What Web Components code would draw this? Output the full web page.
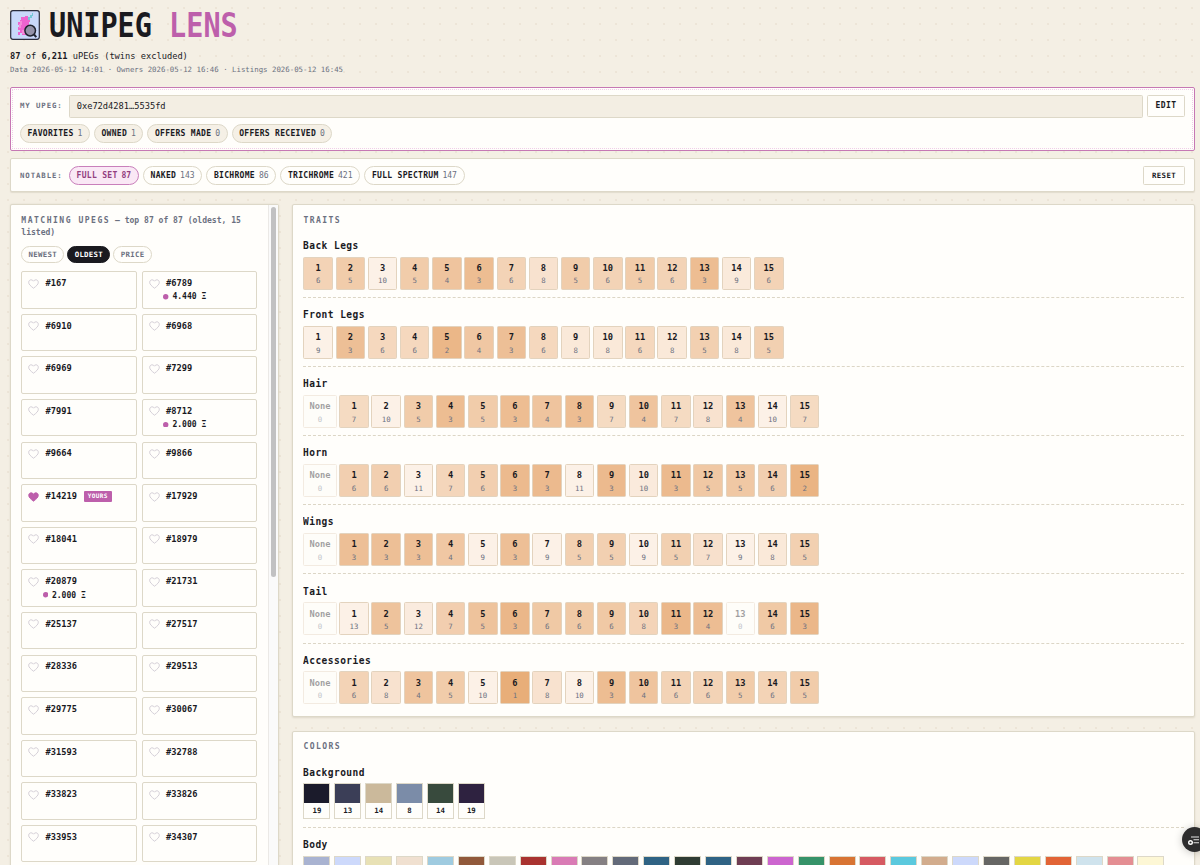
<!DOCTYPE html>
<html lang="en">
<head>
<meta charset="utf-8">
<title>Unipeg Lens</title>
<style>
    html, body {
        margin: 0;
        height: 865px;
        overflow: hidden;
    }
    body {
        --ink: #1a1a1f;
        --muted: #6b7080;
        --line: #ddd8c8;
        --paper: #fffefb;
        --cream: #f5f0e6;
        --pink: #bd5fab;
        background-color: #f4efe4;
        background-image: radial-gradient(circle, #ece4d7 0.7px, transparent 1.1px);
        background-size: 16px 16px;
        color: var(--ink);
        font-family: "DejaVu Sans Mono", "Liberation Mono", monospace;
        font-size: 8.7px;
    }
</style>
</head>
<body>
<lens-app></lens-app>
<script>
class LensHeader extends HTMLElement {

    constructor() {
        super();
        this.shadow = this.attachShadow({mode: 'open'});
        this.render();
    }

    render() {
        this.shadow.innerHTML =
        `
        <style>
            :host{
                display: block;
                height: 77.3px;
                white-space: nowrap;
            }
            .brand{
                display: flex;
                align-items: center;
                gap: 9px;
                height: 30px;
            }
            svg{
                display: block;
                flex: none;
            }
            h1{
                margin: 0;
                font-size: 34px;
                line-height: 30px;
                letter-spacing: 0;
                transform: scaleX(.838);
                transform-origin: 0 50%;
            }
            h1 span{
                color: var(--pink);
            }
            .count{
                margin-top: 10px;
                line-height: 12px;
            }
            .dates{
                margin-top: 3px;
                font-size: 7.38px;
                line-height: 10px;
                color: var(--muted);
            }
        </style>
        <div class="brand">
            <svg width="30" height="30" viewBox="0 0 30 30">
                <rect x=".7" y=".7" width="28.6" height="28.6" rx="2.2" fill="#c9d8fa" stroke="#2b2c3c" stroke-width="1.2"/>
                <path d="M12 7h3v-1h3v3h2v3h-1v3h1v3h-3v7h-5v-2h-2v2H8v-3h2v-2H8v-3h1v-2H8v-3h2v-2h1v-3h1z" fill="#ee63cf"/>
                <path d="M10 11h2v4h-1v3h-2v-4h1zM12 20h3v4h-3z" fill="#f58bd9"/>
                <path d="M18 7h2V5h2V3h1v3h-1v2h-2v2h-2z" fill="#76c9d6"/>
                <circle cx="20.2" cy="20.6" r="5.3" fill="#9492a8" stroke="#20232f" stroke-width="1.5"/>
                <path d="M24 24.5l2.3 2.6" stroke="#20232f" stroke-width="2"/>
            </svg>
            <h1>UNIPEG <span>LENS</span></h1>
        </div>
        <div class="count"><b>87</b> of <b>6,211</b> uPEGs (twins excluded)</div>
        <div class="dates">Data 2026-05-12 14:01 · Owners 2026-05-12 16:46 · Listings 2026-05-12 16:45</div>
        `;
    }
}

customElements.define('lens-header', LensHeader);

class LensChip extends HTMLElement {

    constructor() {
        super();
        this.shadow = this.attachShadow({mode: 'open'});
    }

    connectedCallback() {
        this.render();
    }

    render() {
        const count = this.getAttribute('count');
        this.shadow.innerHTML =
        `
        <style>
            :host{
                display: flex;
                align-items: center;
                gap: 3.9px;
                box-sizing: border-box;
                height: 19px;
                padding: 0 6.5px;
                border: 1px solid var(--line);
                border-radius: 10px;
                background: var(--paper);
                font-size: 8.05px;
                font-weight: bold;
                letter-spacing: .28px;
                white-space: nowrap;
            }
            .count{
                color: var(--muted);
                font-weight: normal;
                letter-spacing: 0;
            }
            :host([tinted]){
                background: var(--cream);
            }
            :host([active]){
                background: #fae8f5;
                border-color: #c97fbb;
                color: #93407f;
            }
            :host([active]) .count{
                color: #93407f;
                font-weight: bold;
            }
            :host([small]){
                height: 17px;
                padding: 0 6.3px;
                font-size: 7.38px;
                letter-spacing: .3px;
                color: var(--muted);
            }
            :host([small][active]){
                background: var(--ink);
                border-color: var(--ink);
                color: #fff;
            }
        </style>
        <span><slot></slot></span>${count === null ? '' : `<span class="count">${count}</span>`}
        `;
    }
}

customElements.define('lens-chip', LensChip);

class LensButton extends HTMLElement {

    constructor() {
        super();
        this.shadow = this.attachShadow({mode: 'open'});
        this.shadow.innerHTML =
        `
        <style>
            :host{
                display: flex;
                align-items: center;
                justify-content: center;
                box-sizing: border-box;
                border: 1px solid var(--line);
                border-radius: 1.5px;
                background: var(--paper);
                font-weight: bold;
            }
        </style>
        <slot></slot>
        `;
    }
}

customElements.define('lens-button', LensButton);

class LensWallet extends HTMLElement {

    constructor() {
        super();
        this.shadow = this.attachShadow({mode: 'open'});
        this.render();
    }

    render() {
        this.shadow.innerHTML =
        `
        <style>
            :host{
                display: block;
                box-sizing: border-box;
                height: 63.5px;
                padding: 6.5px 9px 0 9px;
                border: 1px solid #c678b4;
                border-radius: 2px;
                background: var(--paper);
                outline: 1px dotted #f0cfe8;
                outline-offset: -3.5px;
            }
            .row{
                display: flex;
                align-items: flex-start;
            }
            label{
                width: 49px;
                font-size: 7.38px;
                line-height: 22px;
                letter-spacing: .89px;
                font-weight: bold;
                color: var(--muted);
                white-space: nowrap;
            }
            .address{
                flex: 1;
                box-sizing: border-box;
                height: 23px;
                padding-left: 6.7px;
                border: 1px solid var(--line);
                border-radius: 1.5px;
                background: #f3eee3;
                line-height: 21px;
            }
            lens-button{
                width: 38px;
                height: 22px;
                margin-left: 4.5px;
                font-size: 8.05px;
                letter-spacing: .4px;
            }
            .chips{
                display: flex;
                gap: 4.1px;
                margin-top: 6px;
            }
        </style>
        <div class="row">
            <label>MY UPEG:</label>
            <div class="address">0xe72d4281…5535fd</div>
            <lens-button>EDIT</lens-button>
        </div>
        <div class="chips">
            <lens-chip tinted count="1">FAVORITES</lens-chip>
            <lens-chip tinted count="1">OWNED</lens-chip>
            <lens-chip tinted count="0">OFFERS MADE</lens-chip>
            <lens-chip tinted count="0">OFFERS RECEIVED</lens-chip>
        </div>
        `;
    }
}

customElements.define('lens-wallet', LensWallet);

class LensNotable extends HTMLElement {

    constructor() {
        super();
        this.shadow = this.attachShadow({mode: 'open'});
        this.render();
    }

    render() {
        this.shadow.innerHTML =
        `
        <style>
            :host{
                display: flex;
                align-items: center;
                gap: 4.2px;
                box-sizing: border-box;
                height: 34px;
                margin-top: 7.7px;
                padding: 0 9px;
                border: 1px solid var(--line);
                border-radius: 2px;
                background: var(--paper);
                box-shadow: 0 1px 1px rgba(90,80,50,.12);
            }
            label{
                width: 44.8px;
                font-size: 7.38px;
                letter-spacing: .89px;
                font-weight: bold;
                color: var(--muted);
                white-space: nowrap;
            }
            lens-chip{
                padding: 0 6.6px;
            }
            lens-button{
                width: 42px;
                height: 19px;
                margin-left: auto;
                font-size: 7.38px;
                letter-spacing: .4px;
            }
        </style>
        <label>NOTABLE:</label>
        <lens-chip active count="87">FULL SET</lens-chip>
        <lens-chip count="143">NAKED</lens-chip>
        <lens-chip count="86">BICHROME</lens-chip>
        <lens-chip count="421">TRICHROME</lens-chip>
        <lens-chip count="147">FULL SPECTRUM</lens-chip>
        <lens-button>RESET</lens-button>
        `;
    }
}

customElements.define('lens-notable', LensNotable);

class PegCard extends HTMLElement {

    constructor() {
        super();
        this.shadow = this.attachShadow({mode: 'open'});
    }

    connectedCallback() {
        this.render();
    }

    render() {
        const yours = this.hasAttribute('yours');
        const price = this.getAttribute('price');
        this.shadow.innerHTML =
        `
        <style>
            :host{
                display: block;
                box-sizing: border-box;
                height: 37.3px;
                padding: 4.8px 0 0 6px;
                border: 1px solid var(--line);
                border-radius: 2px;
                background: var(--paper);
            }
            .head{
                display: flex;
                align-items: center;
                height: 12px;
                font-weight: bold;
            }
            svg{
                width: 11px;
                height: 10px;
                margin: 1px 6.2px 0 0;
            }
            .badge{
                height: 10.6px;
                margin: 1px 0 0 7px;
                padding: 0 3.9px;
                background: var(--pink);
                border-radius: 1px;
                color: #fff;
                font-size: 6.04px;
                line-height: 9.6px;
                letter-spacing: .36px;
            }
            .price{
                display: flex;
                align-items: center;
                gap: 3.5px;
                height: 12px;
                margin: 1.8px 0 0 14.7px;
                font-size: 8.05px;
                font-weight: bold;
            }
            .price svg{
                width: 5.4px;
                height: 5.4px;
                margin: 0;
            }
        </style>
        <div class="head">
            <svg viewBox="0 0 11 10"><path d="M5.5 9.2C2.4 6.9.7 5.3.7 3.3.7 1.8 1.8.8 3.1.8c1 0 1.9.5 2.4 1.4C6 1.3 6.9.8 7.900.8c1.300 0 2.400 1 2.400 2.500 0 2-1.700 3.600-4.800 5.900z" fill="${yours ? '#bd5fab' : 'none'}" stroke="${yours ? '#bd5fab' : '#cfc9d3'}" stroke-width=".9"/></svg>
            <span><slot></slot></span>
            ${yours ? '<span class="badge">YOURS</span>' : ''}
        </div>
        ${price ? `<div class="price"><svg viewBox="0 0 6 6"><circle cx="3" cy="3" r="3" fill="#bd5fab"/></svg><span>${price} Ξ</span></div>` : ''}
        `;
    }
}

customElements.define('peg-card', PegCard);

class PegList extends HTMLElement {

    constructor() {
        super();
        this.shadow = this.attachShadow({mode: 'open'});
        this.pegs = [
            '167', '6789', '6910', '6968', '6969', '7299', '7991', '8712', '9664', '9866',
            '14219', '17929', '18041', '18979', '20879', '21731', '25137', '27517',
            '28336', '29513', '29775', '30067', '31593', '32788', '33823', '33826', '33953', '34307'
        ];
        this.prices = {'6789': '4.440', '8712': '2.000', '20879': '2.000'};
        this.render();
    }

    render() {
        const cards = this.pegs.map(id => {
            const price = this.prices[id] ? ` price="${this.prices[id]}"` : '';
            return `<peg-card${price}${id === '14219' ? ' yours' : ''}>#${id}</peg-card>`;
        }).join('');

        this.shadow.innerHTML =
        `
        <style>
            :host{
                display: flex;
                box-sizing: border-box;
                width: 268.5px;
                height: 720px;
                border: 1px solid var(--line);
                border-radius: 2px;
                background: var(--paper);
                box-shadow: 0 0 2px rgba(90,80,50,.12);
            }
            .content{
                flex: 1;
                padding: 9.3px 11px 0 10.3px;
            }
            h2{
                margin: 0;
                font-size: 8.05px;
                line-height: 12px;
                color: var(--muted);
            }
            h2 span{
                letter-spacing: 1.5px;
            }
            .sort{
                display: flex;
                gap: 3px;
                margin: 7.5px 0 8px;
            }
            .grid{
                display: grid;
                grid-template-columns: 1fr 1fr;
                gap: 5.3px;
            }
            .scroll{
                width: 9.5px;
                box-sizing: border-box;
                padding: 2px 2px 0;
                border-left: 1px solid #ebe9e6;
                background: #fafafa;
            }
            .thumb{
                width: 5.3px;
                height: 370px;
                border-radius: 3px;
                background: #c1c1c2;
            }
        </style>
        <div class="content">
            <h2><span>MATCHING UPEGS</span> — top 87 of 87 (oldest, 15 listed)</h2>
            <div class="sort">
                <lens-chip small>NEWEST</lens-chip>
                <lens-chip small active>OLDEST</lens-chip>
                <lens-chip small>PRICE</lens-chip>
            </div>
            <div class="grid">${cards}</div>
        </div>
        <div class="scroll"><div class="thumb"></div></div>
        `;
    }
}

customElements.define('peg-list', PegList);

class LensPanel extends HTMLElement {

    constructor() {
        super();
        this.shadow = this.attachShadow({mode: 'open'});
        this.render();
    }

    render() {
        this.shadow.innerHTML =
        `
        <style>
            :host{
                display: block;
                box-sizing: border-box;
                padding: 9.4px 10.5px 0 10.3px;
                border: 1px solid var(--line);
                border-radius: 2px;
                background: var(--paper);
                box-shadow: 0 1px 2px rgba(90,80,50,.14);
            }
            h2{
                margin: 0 0 11.3px;
                font-size: 8.05px;
                line-height: 12px;
                letter-spacing: 1.45px;
                color: var(--muted);
            }
        </style>
        <h2>${this.getAttribute('heading')}</h2>
        <slot></slot>
        `;
    }
}

customElements.define('lens-panel', LensPanel);

class LensGroup extends HTMLElement {

    constructor() {
        super();
        this.shadow = this.attachShadow({mode: 'open'});
        this.render();
    }

    render() {
        this.shadow.innerHTML =
        `
        <style>
            :host{
                display: block;
                padding-bottom: 7.6px;
                margin-bottom: 9.1px;
                border-bottom: 1px dashed #dcd6c6;
            }
            :host(:last-child){
                border-bottom: 0;
                margin-bottom: 0;
            }
            h3{
                margin: 0 0 4.8px;
                font-size: 10.6px;
                line-height: 14px;
                letter-spacing: .5px;
                white-space: pre;
                transform: scaleX(.9);
                transform-origin: 0 50%;
            }
            .items{
                display: flex;
                gap: var(--gap, 2.7px);
            }
        </style>
        <h3>${this.getAttribute('name')}</h3>
        <div class="items"><slot></slot></div>
        `;
    }
}

customElements.define('lens-group', LensGroup);

class TraitTile extends HTMLElement {

    constructor() {
        super();
        this.shadow = this.attachShadow({mode: 'open'});
    }

    connectedCallback() {
        this.render();
    }

    render() {
        const count = Number(this.getAttribute('count'));
        const max = Number(this.getAttribute('max'));
        // the rarer the trait the darker the tile
        const t = 1 - count / max;
        const mix = (a, b) => Math.round(a + (b - a) * t);
        const color = count ? `rgb(${mix(252, 230)},${mix(241, 166)},${mix(231, 109)})` : '#fdfcf8';
        this.shadow.innerHTML =
        `
        <style>
            :host{
                display: flex;
                flex-direction: column;
                align-items: center;
                box-sizing: border-box;
                width: 29.5px;
                height: 32.6px;
                padding-top: 4.2px;
                border: 1px solid #e3d3be;
                border-radius: 1.5px;
                background: ${color};
                opacity: ${count ? 1 : .42};
                font-weight: bold;
                line-height: 12px;
            }
            :host([none]){
                width: 33.2px;
            }
            small{
                margin-top: 1.3px;
                font-size: 7.38px;
                font-weight: normal;
                color: var(--muted);
            }
        </style>
        <slot></slot>
        <small>${count}</small>
        `;
    }
}

customElements.define('trait-tile', TraitTile);

class ColorSwatch extends HTMLElement {

    constructor() {
        super();
        this.shadow = this.attachShadow({mode: 'open'});
    }

    connectedCallback() {
        this.render();
    }

    render() {
        this.shadow.innerHTML =
        `
        <style>
            :host{
                display: block;
                box-sizing: border-box;
                width: 27px;
                height: 36px;
                border: 1px solid var(--line);
                background: var(--paper);
                font-size: 7.38px;
                font-weight: bold;
                line-height: 15px;
                text-align: center;
            }
            .color{
                height: 19px;
                background: ${this.getAttribute('color')};
            }
        </style>
        <div class="color"></div>
        <slot></slot>
        `;
    }
}

customElements.define('color-swatch', ColorSwatch);

class LensMain extends HTMLElement {

    constructor() {
        super();
        this.shadow = this.attachShadow({mode: 'open'});
        this.traits = [
            ['Back Legs', [6, 5, 10, 5, 4, 3, 6, 8, 5, 6, 5, 6, 3, 9, 6]],
            ['Front Legs', [9, 3, 6, 6, 2, 4, 3, 6, 8, 8, 6, 8, 5, 8, 5]],
            ['Hair', [0, 7, 10, 5, 3, 5, 3, 4, 3, 7, 4, 7, 8, 4, 10, 7]],
            ['Horn', [0, 6, 6, 11, 7, 6, 3, 3, 11, 3, 10, 3, 5, 5, 6, 2]],
            ['Wings', [0, 3, 3, 3, 4, 9, 3, 9, 5, 5, 9, 5, 7, 9, 8, 5]],
            ['Tail', [0, 13, 5, 12, 7, 5, 3, 6, 6, 6, 8, 3, 4, 0, 6, 3]],
            ['Accessories', [0, 6, 8, 4, 5, 10, 1, 8, 10, 3, 4, 6, 6, 5, 6, 5]]
        ];
        this.background = [
            ['#1b1b2b', 19], ['#3b3e57', 13], ['#cbb99b', 14],
            ['#7b8ca8', 8], ['#384a3d', 14], ['#2e2240', 19]
        ];
        this.body = [
            '#a9b3d1', '#cdd9fb', '#e8e1b5', '#f0e0d0', '#9fcbe0', '#91593b', '#c9c6b8',
            '#a93330', '#d97bb5', '#858083', '#636a79', '#2f6384', '#2f3c33', '#2f6384',
            '#6f3d53', '#cc65cf', '#369369', '#d87433', '#d65a62', '#5bc9de', '#d2ac8d',
            '#cdd9fb', '#666664', '#e3d643', '#e26436', '#cfe3ed', '#e48e93', '#fdf7d5'
        ];
        this.render();
    }

    group([name, counts]) {
        const max = Math.max(...counts);
        const first = counts.length === 16 ? 0 : 1;
        const tiles = counts.map((count, i) => {
            const label = i + first;
            return `<trait-tile count="${count}" max="${max}"${label ? '' : ' none'}>${label || 'None'}</trait-tile>`;
        }).join('');
        return `<lens-group name="${name}">${tiles}</lens-group>`;
    }

    render() {
        this.shadow.innerHTML =
        `
        <style>
            :host{
                display: flex;
                flex-direction: column;
                flex: 1;
                gap: 14px;
                min-width: 0;
            }
            .traits{
                height: 512.5px;
            }
            .colors{
                height: 220px;
                --gap: 3.9px;
            }
        </style>
        <lens-panel heading="TRAITS" class="traits">${this.traits.map(t => this.group(t)).join('')}</lens-panel>
        <lens-panel heading="COLORS" class="colors">
            <lens-group name="Background">${this.background.map(([c, n]) => `<color-swatch color="${c}">${n}</color-swatch>`).join('')}</lens-group>
            <lens-group name="Body">${this.body.map(c => `<color-swatch color="${c}"></color-swatch>`).join('')}</lens-group>
        </lens-panel>
        `;
        this.shadow.querySelectorAll('lens-panel').forEach(panel => panel.render());
        this.shadow.querySelectorAll('lens-group').forEach(group => group.render());
    }
}

customElements.define('lens-main', LensMain);

class LensApp extends HTMLElement {

    constructor() {
        super();
        this.shadow = this.attachShadow({mode: 'open'});
        this.render();
    }

    render() {
        this.shadow.innerHTML =
        `
        <style>
            :host{
                display: block;
                box-sizing: border-box;
                height: 865px;
                padding: 10px 5px 0 10px;
                overflow: hidden;
            }
            .columns{
                display: flex;
                gap: 13.6px;
                margin-top: 12px;
            }
            /* floating button, half out of the window */
            .float{
                position: fixed;
                left: 1182px;
                top: 827px;
                width: 25px;
                height: 25px;
                border-radius: 50%;
                background: #2d2d2e;
                box-shadow: 0 1px 8px rgba(0,0,0,.22);
            }
        </style>
        <lens-header></lens-header>
        <lens-wallet></lens-wallet>
        <lens-notable></lens-notable>
        <div class="columns">
            <peg-list></peg-list>
            <lens-main></lens-main>
        </div>
        <div class="float">
            <svg width="25" height="25" viewBox="0 0 25 25">
                <path d="M9 10h8M11.5 12.7h5.5M11.5 15.7h5.5" stroke="#e4e4e4" stroke-width="1.1"/>
                <circle cx="8.5" cy="15.5" r="1.8" fill="#2d2d2e" stroke="#fff" stroke-width="1.4"/>
            </svg>
        </div>
        `;
    }
}

customElements.define('lens-app', LensApp);
</script>
</body>
</html>
